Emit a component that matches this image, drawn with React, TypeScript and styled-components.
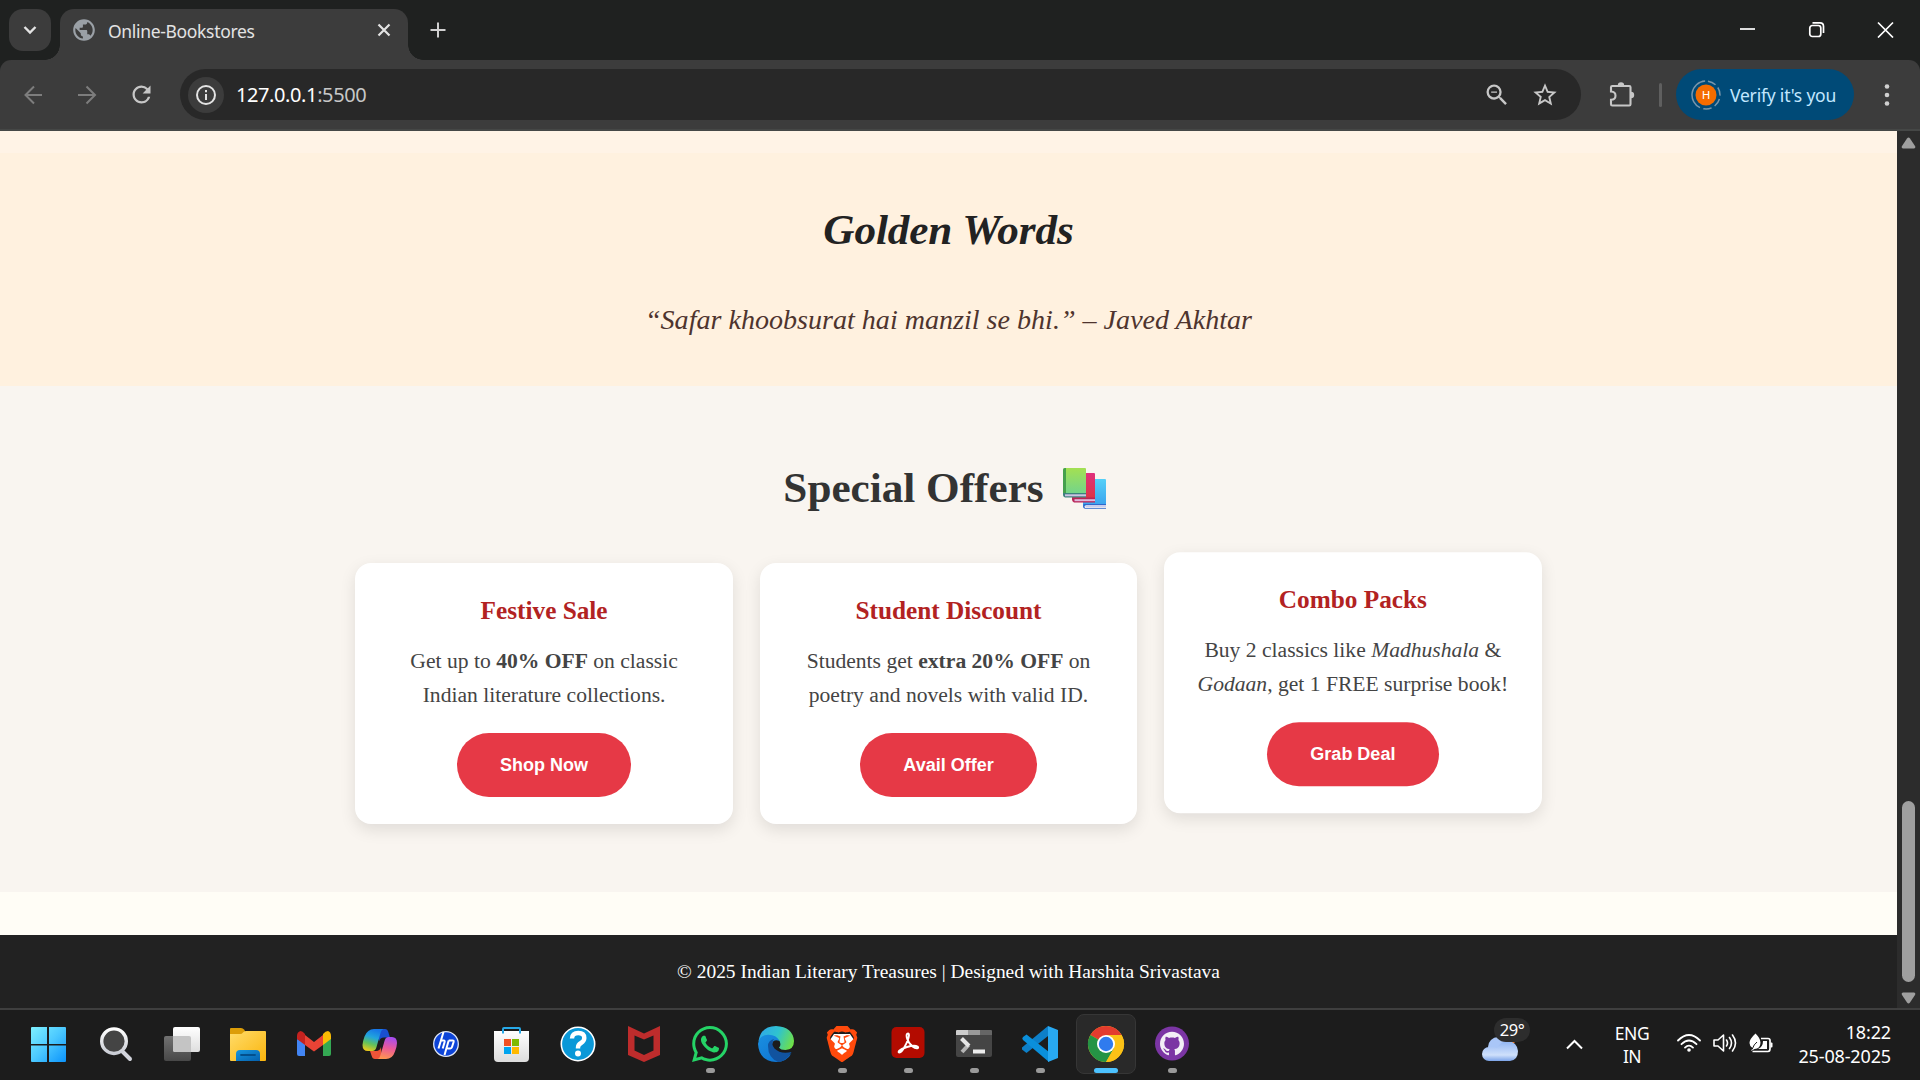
import React from "react";
import styled, { createGlobalStyle } from "styled-components";
import { MdPublic, MdRefresh, MdStarBorder, MdZoomOut } from "react-icons/md";
import { SiBrave, SiGithub } from "react-icons/si";
import { FaWhatsapp } from "react-icons/fa";

const Global = createGlobalStyle`
  * { box-sizing: border-box; }
  html, body { margin: 0; padding: 0; overflow: hidden; background: #1c1c1c; }
  h2, h3, p { margin: 0; }
`;

const ui = `"Noto Sans", "Open Sans", sans-serif`;
const serif = `"Liberation Serif", "Times New Roman", serif`;

const Screen = styled.div`
  width: 1920px;
  height: 1080px;
  display: flex;
  flex-direction: column;
  font-family: ${ui};
  overflow: hidden;
`;

/* ---------- browser frame ---------- */
const TabStrip = styled.div`
  height: 60px;
  flex: none;
  display: flex;
  align-items: flex-start;
  padding: 9px 0 0 9px;
  background: #1f2120;
`;
const TabSearch = styled.div`
  width: 42px;
  height: 42px;
  border-radius: 14px;
  background: #3c3c3c;
  display: grid;
  place-items: center;
`;
const Tab = styled.div`
  position: relative;
  width: 348px;
  height: 51px;
  margin-left: 9px;
  padding: 0 17px 9px 11px;
  border-radius: 14px 14px 0 0;
  background: #3c3c3c;
  display: flex;
  align-items: center;
  color: #9aa0a6;
  svg { flex: none; }
  &::before, &::after {
    content: "";
    position: absolute;
    bottom: 0;
    width: 15px;
    height: 15px;
  }
  &::before { left: -15px; background: radial-gradient(circle at 0 0, transparent 14.5px, #3c3c3c 15px); }
  &::after { right: -15px; background: radial-gradient(circle at 100% 0, transparent 14.5px, #3c3c3c 15px); }
`;
const TabTitle = styled.span`
  flex: 1;
  margin-left: 11px;
  padding-top: 2px;
  font-size: 17.5px;
  letter-spacing: -0.33px;
  color: #e3e3e3;
  white-space: nowrap;
`;
const NewTab = styled.div`
  margin: 13px 0 0 22px;
  display: flex;
`;
const WindowButtons = styled.div`
  margin: 12px 26px 0 auto;
  display: flex;
  gap: 52px;
`;
const ToolbarWrap = styled.div`
  height: 71px;
  flex: none;
  background: #1f2120;
`;
const Toolbar = styled.div`
  height: 71px;
  border-radius: 11px 11px 0 0;
  background: #3c3c3c;
  box-shadow: inset 0 -2px 0 #454746;
  display: flex;
  align-items: center;
  padding: 0 26px 2px 20px;
`;
const NavIcons = styled.div`
  display: flex;
  align-items: center;
  gap: 26px;
  width: 160px;
  color: #c7c7c7;
`;
const AddressBar = styled.div`
  width: 1401px;
  height: 51px;
  border-radius: 26px;
  background: #282828;
  display: flex;
  align-items: center;
  padding: 0 22px 0 8px;
  color: #c7c7c7;
`;
const InfoChip = styled.div`
  width: 36px;
  height: 36px;
  border-radius: 50%;
  background: #3c3c3c;
  display: grid;
  place-items: center;
`;
const Url = styled.div`
  flex: 1;
  margin-left: 12px;
  font-size: 20px;
  letter-spacing: -0.4px;
  color: #fff;
  span { color: #c7c7c7; }
`;
const BarIcon = styled.span<{ $gap: number }>`
  display: flex;
  margin-left: ${(p) => p.$gap}px;
`;
const Divider = styled.div`
  width: 3px;
  height: 24px;
  margin: 0 14px 0 23px;
  border-radius: 2px;
  background: #5f5f5f;
`;
const Profile = styled.div`
  width: 178px;
  height: 51px;
  border-radius: 26px;
  background: #004a77;
  display: flex;
  align-items: center;
  padding-left: 15px;
  gap: 9px;
  font-size: 17.5px;
  letter-spacing: -0.2px;
  color: #c2e7ff;
  white-space: nowrap;
`;

/* ---------- web page ---------- */
const Viewport = styled.div`
  height: 877px;
  flex: none;
  display: flex;
`;
const Page = styled.main`
  width: 1897px;
  display: flex;
  flex-direction: column;
  font-family: ${serif};
  text-align: center;
  background: #fffdf6;
`;
const SectionTail = styled.div`
  height: 22px;
  flex: none;
  background: #fff3e6;
`;
const GoldenWords = styled.section`
  height: 233px;
  flex: none;
  padding-top: 52px;
  background: #fff1df;
  font-style: italic;
`;
const Heading = styled.h2<{ $color: string; $tracking?: number }>`
  display: flex;
  justify-content: center;
  align-items: center;
  font-size: 43.2px;
  line-height: 50px;
  letter-spacing: ${(p) => p.$tracking ?? 0}px;
  color: ${(p) => p.$color};
  svg { margin: 0 8px 0 19px; }
`;
const Quote = styled.p`
  margin-top: 47px;
  font-size: 28.08px;
  line-height: 36px;
  color: #4e342e;
`;
const Offers = styled.section`
  height: 506px;
  flex: none;
  padding-top: 77px;
  background: #f9f5f0;
`;
const CardRow = styled.div`
  display: flex;
  justify-content: center;
  gap: 26.6px;
  margin-top: 50px;
`;
const Card = styled.article<{ $lifted?: boolean }>`
  width: 377.8px;
  height: 261px;
  padding: 32px 0 0;
  border-radius: 16px;
  background: #fff;
  box-shadow: 0 5.4px 16px rgba(0, 0, 0, 0.1);
  transform: ${(p) => (p.$lifted ? "translateY(-10.8px)" : "none")};
`;
const CardTitle = styled.h3`
  font-size: 25.27px;
  line-height: 30px;
  color: #b22222;
`;
const CardText = styled.p`
  margin-top: 19px;
  font-size: 21.6px;
  line-height: 34.4px;
  color: #444;
  white-space: nowrap;
`;
const CardButton = styled.button`
  height: 64px;
  margin-top: 20px;
  padding: 2px 43.4px 0;
  border: 0;
  border-radius: 40px;
  background: #e63946;
  color: #fff;
  font: bold 18px "Liberation Sans", Arial, sans-serif;
`;
const Footer = styled.footer`
  height: 73px;
  margin-top: auto;
  background: #222;
  color: #fff;
  font-size: 19.44px;
  line-height: 74px;
`;
const Scrollbar = styled.div`
  width: 23px;
  padding: 6px 0 4px;
  background: #2c2c2c;
  display: flex;
  flex-direction: column;
  align-items: center;
  justify-content: space-between;
`;
const ScrollEnd = styled.div`
  display: flex;
  flex-direction: column;
  align-items: center;
  gap: 10px;
`;
const Thumb = styled.div`
  width: 13px;
  height: 181px;
  border-radius: 7px;
  background: #9f9f9f;
`;

/* ---------- taskbar ---------- */
const Taskbar = styled.div`
  height: 72px;
  flex: none;
  border-top: 2px solid #3f3f3f;
  background: #1c1c1c;
  display: flex;
  align-items: flex-start;
  justify-content: space-between;
  padding: 4px 29px 0 20px;
  color: #fff;
`;
const Apps = styled.div`
  display: flex;
  gap: 6px;
`;
const AppTile = styled.div<{ $active?: boolean }>`
  width: 60px;
  height: 60px;
  padding-top: ${(p) => (p.$active ? 11 : 12)}px;
  border-radius: 8px;
  border: ${(p) => (p.$active ? "1px solid #363636" : "0")};
  background: ${(p) => (p.$active ? "#292929" : "transparent")};
  display: flex;
  flex-direction: column;
  align-items: center;
  gap: 6px;
  svg { flex: none; overflow: visible; }
`;
const Running = styled.div<{ $active?: boolean }>`
  width: ${(p) => (p.$active ? 24 : 9)}px;
  height: 5px;
  flex: none;
  border-radius: 3px;
  background: ${(p) => (p.$active ? "#4cc2ff" : "#9a9a9a")};
`;
const Tray = styled.div`
  height: 60px;
  display: flex;
  align-items: center;
`;
const Weather = styled.div`
  position: relative;
  width: 48px;
  height: 60px;
  padding-top: 21px;
  margin-right: 36px;
`;
const Temp = styled.span`
  position: absolute;
  left: 12px;
  top: 4px;
  width: 36px;
  height: 24px;
  border-radius: 12px;
  background: #2d2d2d;
  font-size: 16.5px;
  letter-spacing: -0.5px;
  line-height: 23px;
  text-align: center;
`;
const Lang = styled.div`
  width: 50px;
  margin: 1px 20px 0 24px;
  text-align: center;
  font-size: 17.5px;
  letter-spacing: -0.5px;
  line-height: 23px;
`;
const Status = styled.div`
  display: flex;
  gap: 12px;
`;
const Clock = styled.div`
  width: 118px;
  text-align: right;
  font-size: 18px;
  letter-spacing: -0.14px;
  line-height: 24px;
  padding-bottom: 1px;
`;

const Books = () => (
  <svg width="43" height="41" viewBox="0 0 43 41">
    <defs>
      <linearGradient id="bg" x1="0" y1="0" x2="0" y2="1"><stop stopColor="#a4e052" /><stop offset="1" stopColor="#72d48c" /></linearGradient>
      <linearGradient id="bb" x1="0" y1="0" x2="0" y2="1"><stop stopColor="#56d0f8" /><stop offset="1" stopColor="#3aa2ee" /></linearGradient>
      <linearGradient id="br" x1="0" y1="0" x2="0" y2="1"><stop stopColor="#e0307c" /><stop offset="1" stopColor="#de3344" /></linearGradient>
    </defs>
    <path d="M22 11h20q1 0 1 1v26H20V13z" fill="url(#bb)" />
    <path d="M20.500 36H43v1H22q-1 1.500 0 3h21v.8H22q-2-.8-2-2.400z" fill="#2f68cc" />
    <path d="M22.500 37H43v2.500H22.500z" fill="#c9ceee" />
    <path d="M11 5h20q1 0 1 1v25H9V7z" fill="url(#br)" />
    <path d="M9 29.500h23v5H11q-2-.8-2-3z" fill="#b92458" />
    <path d="M11.500 31.200H32v2H11.500z" fill="#dfb9dc" />
    <path d="M2 0h20q1 0 1 1v25H0V2q0-2 2-2z" fill="url(#bg)" />
    <path d="M0 2q0-2 2-2h1v25H0z" fill="#45a04d" />
    <path d="M0 25h23v4.500H2q-2-.8-2-2.500z" fill="#3e817d" />
    <path d="M2 26.300h21v2H2z" fill="#cdc3e4" />
  </svg>
);

const S = ({ children }: { children: React.ReactNode }) => (
  <svg width="36" height="36" viewBox="0 0 36 36">{children}</svg>
);

const Windows = () => (
  <S>
    <defs><linearGradient id="win" gradientUnits="userSpaceOnUse" x1="0" y1="1" x2="36" y2="36"><stop stopColor="#80f2ff" /><stop offset=".5" stopColor="#4cc9ff" /><stop offset="1" stopColor="#0b93fb" /></linearGradient></defs>
    <path transform="translate(-2 0)" fill="url(#win)" d="M2 1h15v17H1V2q0-1 1-1zM19 1h16q1 0 1 1v16H19zM1 19.500h16V36H2q-1 0-1-1zM19 19.500h17V35q0 1-1 1H19z" />
  </S>
);
const Search = () => (
  <S>
    <defs><linearGradient id="sr" x1="0" y1="0" x2="0" y2="1"><stop stopColor="#fff" /><stop offset="1" stopColor="#c9ccd4" /></linearGradient></defs>
    <path d="M24.500 25.500l7.500 7.500" stroke="#d2d4dc" strokeWidth="4" strokeLinecap="round" />
    <circle cx="16" cy="15.200" r="12.300" fill="#444" stroke="url(#sr)" strokeWidth="3.400" />
  </S>
);
const TaskView = () => (
  <S>
    <defs>
      <linearGradient id="tv" x1="0" y1="0" x2="0" y2="1"><stop stopColor="#717171" /><stop offset="1" stopColor="#484848" /></linearGradient>
      <linearGradient id="tw" x1="0" y1="0" x2="0" y2="1"><stop stopColor="#fff" /><stop offset="1" stopColor="#dedede" /></linearGradient>
    </defs>
    <rect x="0" y="10" width="27" height="25" rx="2" fill="url(#tv)" />
    <rect x="9" y="1" width="27" height="25" rx="2" fill="url(#tw)" />
    <path d="M9 10h16q2 0 2 2v14H11q-2 0-2-2z" fill="#c4c4c4" />
  </S>
);
const Folder = () => (
  <S>
    <defs>
      <linearGradient id="fo" x1="0" y1="0" x2="1" y2="1"><stop stopColor="#ffdc6a" /><stop offset="1" stopColor="#fbb50d" /></linearGradient>
      <linearGradient id="fb" x1="0" y1="0" x2="1" y2="1"><stop stopColor="#1696e0" /><stop offset="1" stopColor="#0560ad" /></linearGradient>
    </defs>
    <path d="M0 8V3q0-1 1-1h10q2 0 3 1.500l2 3L11 12H0z" fill="#dc9d08" />
    <path d="M0 8h10q2 0 3-1.500T16 5h19q1 0 1 1v28q0 1-1 1H1q-1 0-1-1z" fill="url(#fo)" />
    <path d="M6 35v-7q0-4 4-4h16q4 0 4 4v7z" fill="url(#fb)" />
    <path d="M11 29h14" stroke="#034f8c" strokeWidth="1.800" strokeLinecap="round" />
  </S>
);
const Gmail = () => (
  <S>
    <path d="M1 13v15q0 2 2 2h6V17z" fill="#4285f4" />
    <path d="M27 17v13h6q2 0 2-2V12z" fill="#34a853" />
    <path d="M9 9l9 7 9-7v10l-9 6.500L9 19z" fill="#ea4335" />
    <path d="M1 10q0-4 3.500-5 2 0 4.500 3v11l-8-6z" fill="#c5221f" />
    <path d="M27 8q2.500-3 5-3 3 1 3 5v3l-8 6z" fill="#fbbc04" />
  </S>
);
const Copilot = () => (
  <S>
    <defs>
      <linearGradient id="c1" x1=".5" y1="0" x2=".2" y2="1"><stop stopColor="#1778e8" /><stop offset=".35" stopColor="#22a5dc" /><stop offset=".65" stopColor="#62c25c" /><stop offset="1" stopColor="#f6cb16" /></linearGradient>
      <linearGradient id="c2" x1=".6" y1="0" x2=".4" y2="1"><stop stopColor="#a54cf0" /><stop offset=".5" stopColor="#ec5a98" /><stop offset="1" stopColor="#ff9550" /></linearGradient>
    </defs>
    <path d="M15 3h8q2.500 0 3.300 3l1.700 5.500h-6q-4 0-5 4z" fill="#1a4fd0" />
    <path d="M20 33h-7q-2.600 0-3.300-3L8 25h6q4 0 5-4z" fill="#ef5438" />
    <path d="M12 3h9.500q-2.200.5-3 4l-4 14q-1 4-4 4H6q-5.500 0-5.500-6 0-3 2-8.500Q5.500 3 12 3z" fill="url(#c1)" />
    <path d="M24 33h-8.500q2.200-.5 3-4l4-14q1-4 4-4H30q5 0 5 6 0 3-2 8.500Q30.500 33 24 33z" fill="url(#c2)" />
  </S>
);
const Hp = () => (
  <S>
    <circle cx="18" cy="18" r="12.300" fill="#0d44d8" stroke="#dfe6f5" strokeWidth="1.300" />
    <path d="M15.500 6l-5 16.500M13 14.500h2.800q1.200 0 .8 1.600L14.700 22.500M20.700 14.500L16.500 29M20.700 14.500h4q1.300 0 .9 1.500L24 21q-.4 1.400-1.700 1.400h-3" fill="none" stroke="#fff" strokeWidth="2" />
  </S>
);
const Store = () => (
  <S>
    <defs><linearGradient id="st" x1="0" y1="0" x2="0" y2="1"><stop stopColor="#fff" /><stop offset="1" stopColor="#dcdcdc" /></linearGradient></defs>
    <path d="M0 5h35v27q0 4-4 4H4q-4 0-4-4z" fill="url(#st)" />
    <path d="M9 7.500V3q0-1 1-1h15q1 0 1 1v4.500" fill="none" stroke="#27a9e8" strokeWidth="2" />
    <path d="M10 13h7v7h-7z" fill="#f25022" /><path d="M18 13h7v7h-7z" fill="#7fba00" />
    <path d="M10 21h7v7h-7z" fill="#00a4ef" /><path d="M18 21h7v7h-7z" fill="#ffb900" />
  </S>
);
const Help = () => (
  <S>
    <circle cx="18" cy="18" r="16.700" fill="#0a98d8" stroke="#fff" strokeWidth="1.600" />
    <path d="M12 12.500q0-5.500 6.300-5.500 6 0 6 5 0 3-3.300 5-3 1.800-3 4.500v1" fill="none" stroke="#fff" strokeWidth="4.400" />
    <circle cx="18" cy="27.500" r="3" fill="#fff" />
  </S>
);
const Mcafee = () => (
  <S>
    <path d="M2 0l16 7.500L34 0v29l-16 7-16-7z" fill="#be2c2c" />
    <path d="M8.500 9.500l9.500 4 9.500-4v15L18 29l-9.500-4.500z" fill="#1c1c1c" />
  </S>
);
const Edge = () => (
  <S>
    <defs>
      <linearGradient id="e1" x1="0" y1=".3" x2="1" y2=".6"><stop stopColor="#2fa8e8" /><stop offset=".5" stopColor="#2fc3cf" /><stop offset="1" stopColor="#6fe048" /></linearGradient>
      <linearGradient id="e2" x1="0" y1="0" x2="1" y2="1"><stop stopColor="#1a8fe0" /><stop offset="1" stopColor="#0c6fcf" /></linearGradient>
    </defs>
    <path d="M.500 15Q3 0 18 0q17 1 18 15 0 8.500-8.500 9-5 0-6.500-2.500 1.800-1.500 1.300-4Q22 13 17 13 10 9 .500 15z" fill="url(#e1)" />
    <path d="M0 18Q1 9 10 8.800q8-.3 11.500 6-6.500-2.300-7.500 3.500-.5 9 8 12 8 1.500 11.500-3Q29 36 18 36 1 35 0 18z" fill="url(#e2)" />
    <path d="M10 20q0-5.500 6-7-3.500 5 .5 9.500 6 6 17 3.500Q29 35 20.500 36 10 32 10 20z" fill="#11539f" />
  </S>
);
const Acrobat = () => (
  <S>
    <rect x="1.500" y="1" width="33" height="31" rx="5" fill="#b30b00" />
    <path d="M18 7.500q-2 0-1.200 4 1.200 5 5.700 9 2.500 2 4.700 1.800 1.800-.5.300-1.800-3-1.800-10.500.5-6 2-8 4-1 1.600.5 1.600 2-.2 5-5.600Q18.500 14 19 9.500q0-2-1-2z" fill="none" stroke="#fff" strokeWidth="1.900" />
  </S>
);
const Terminal = () => (
  <S>
    <path d="M0 9h36v20q0 2-2 2H2q-2 0-2-2z" fill="#454545" />
    <path d="M0 9V5q0-1 1-1h11v5z" fill="#ccc" /><path d="M12 4h12v5H12z" fill="#999" /><path d="M24 4h11q1 0 1 1v4H24z" fill="#666" />
    <path d="M12.500 19L6 26" stroke="#b5b5b5" strokeWidth="4" /><path d="M5.500 12.500l7.500 7.500" stroke="#e6e6e6" strokeWidth="4" />
    <path d="M17 23.500h12v4H17z" fill="#eee" />
  </S>
);
const VsCode = () => (
  <S>
    <path d="M26 0v10L4.500 27 0 23.500v-2z" fill="#0d7fc8" />
    <path d="M1 11l3.500-2.500L27 26v10L1 14q-1.500-1.500 0-3z" fill="#0a8fdb" />
    <path d="M26 0l10 4v28l-10 4z" fill="#28a9f2" />
  </S>
);
const Chrome = () => (
  <S>
    <circle cx="18" cy="18" r="18" fill="#fbc116" />
    <path d="M18 18L2.400 9A18 18 0 0 1 33.600 9z" fill="#e33b2e" />
    <path d="M2.400 9A18 18 0 0 0 18 36l7.800-13.500L18 18z" fill="#259445" />
    <path d="M18 36l7.800-13.500L27 18 18 9h15.600A18 18 0 0 1 18 36z" fill="#fbc116" />
    <circle cx="18" cy="18" r="9" fill="#fff" /><circle cx="18" cy="18" r="7.200" fill="#2f7bee" />
  </S>
);
const Brave = () => (
  <S>
    <path d="M10 8h16l4 6-3 10-9 6-9-6-3-10z" fill="#fff" />
    <SiBrave size={36} color="#ff4a0c" />
  </S>
);
const GitHub = () => (
  <S>
    <circle cx="18" cy="17.500" r="17" fill="#7b35a4" />
    <SiGithub x="6" y="5.500" size={24} color="#f2eef6" />
  </S>
);
const WhatsApp = () => <S><FaWhatsapp x="-2.500" y="-2.500" size={41} color="#25d366" /></S>;

const apps: { icon: React.ReactNode; running?: boolean; active?: boolean }[] = [
  { icon: <Windows /> }, { icon: <Search /> }, { icon: <TaskView /> }, { icon: <Folder /> },
  { icon: <Gmail /> }, { icon: <Copilot /> }, { icon: <Hp /> }, { icon: <Store /> },
  { icon: <Help /> }, { icon: <Mcafee /> }, { icon: <WhatsApp />, running: true }, { icon: <Edge /> },
  { icon: <Brave />, running: true }, { icon: <Acrobat />, running: true }, { icon: <Terminal />, running: true },
  { icon: <VsCode />, running: true }, { icon: <Chrome />, running: true, active: true }, { icon: <GitHub />, running: true },
];

const Arrow = ({ down }: { down?: boolean }) => (
  <svg width="15" height="12" viewBox="0 0 15 12">
    <path transform={down ? "rotate(180 7.500 6)" : undefined} d="M6 1.500q1.500-1.800 3 0l5 7.500q1 2-1 2.500H2q-2-.5-1-2.500z" fill="#9f9f9f" />
  </svg>
);

const Nav = ({ d, color, w = 2 }: { d: string; color: string; w?: number }) => (
  <svg width="28" height="28" viewBox="0 0 28 28" fill="none" stroke={color} strokeWidth={w}><path d={d} /></svg>
);

export default function App() {
  return (
    <Screen>
      <Global />
      <TabStrip>
        <TabSearch>
          <svg width="14" height="10" viewBox="0 0 14 10" fill="none" stroke="#e3e3e3" strokeWidth="2.400"><path d="M1.500 2L7 7.500 12.500 2" /></svg>
        </TabSearch>
        <Tab>
          <MdPublic size={26} />
          <TabTitle>Online-Bookstores</TabTitle>
          <svg width="14" height="14" viewBox="0 0 14 14" stroke="#e3e3e3" strokeWidth="2.200"><path d="M1.500 1.500l11 11M12.500 1.500l-11 11" /></svg>
        </Tab>
        <NewTab>
          <svg width="16" height="16" viewBox="0 0 16 16" stroke="#d0d0d0" strokeWidth="2"><path d="M8 .500v15M.500 8h15" /></svg>
        </NewTab>
        <WindowButtons>
          <svg width="17" height="17" viewBox="0 0 17 17" stroke="#fff" strokeWidth="1.700"><path d="M1 8h15" /></svg>
          <svg width="17" height="17" viewBox="0 0 17 17" fill="none" stroke="#fff" strokeWidth="1.700"><rect x="1.800" y="4.500" width="11" height="11" rx="2.500" /><path d="M4.500 1.800h7.500q3.500 0 3.500 3.500V12" /></svg>
          <svg width="17" height="17" viewBox="0 0 17 17" stroke="#fff" strokeWidth="1.700"><path d="M1 1.500l15 15M16 1.500L1 16.500" /></svg>
        </WindowButtons>
      </TabStrip>

      <ToolbarWrap>
        <Toolbar>
          <NavIcons>
            <Nav color="#7d7d7d" d="M22 14H6M14 5.500L5.500 14l8.500 8.500" />
            <Nav color="#7d7d7d" d="M4 14h17M12.500 5.500L21 14l-8.500 8.500" />
            <MdRefresh size={27} />
          </NavIcons>
          <AddressBar>
            <InfoChip>
              <svg width="22" height="22" viewBox="0 0 22 22" fill="none" stroke="#e3e3e3" strokeWidth="2"><circle cx="11" cy="11" r="9" /><path d="M11 10v6M11 6v2.200" /></svg>
            </InfoChip>
            <Url>127.0.0.1<span>:5500</span></Url>
            <BarIcon $gap={0}><MdZoomOut size={28} /></BarIcon>
            <BarIcon $gap={20}><MdStarBorder size={28} /></BarIcon>
          </AddressBar>
          <BarIcon $gap={27}>
            <svg width="28" height="28" viewBox="0 0 28 28">
              <path d="M4.300 5h17q1.200 0 1.200 1.200v17q0 1.300-1.200 1.300h-17Q3 24.500 3 23.200v-4.500q4.500 0 4.500-4T3 10.500V6.200Q3 5 4.300 5z" fill="none" stroke="#c7c7c7" strokeWidth="2.100" />
              <path d="M9.800 4.500a3.200 3.200 0 0 1 6.400 0zM23 10.800a3.200 3.200 0 0 1 0 6.400z" fill="#c7c7c7" />
            </svg>
          </BarIcon>
          <Divider />
          <Profile>
            <svg width="30" height="30" viewBox="0 0 30 30">
              <circle cx="15" cy="15" r="14" fill="none" stroke="#7896ab" strokeWidth="1.500" strokeDasharray="8.500 3.500 8.500 3.500 8.500 3.500 8.500 3.500 36.500 3.460" transform="rotate(-82 15 15)" />
              <circle cx="15" cy="15" r="10.500" fill="#f56c00" />
              <text x="15" y="19.200" fontSize="11.500" fontFamily="Roboto, sans-serif" fill="#fff" textAnchor="middle">H</text>
            </svg>
            Verify it's you
          </Profile>
          <BarIcon $gap={30}>
            <svg width="6" height="24" viewBox="0 0 6 24" fill="#d0d0d0"><circle cx="3" cy="3.500" r="2.300" /><circle cx="3" cy="12" r="2.300" /><circle cx="3" cy="20.500" r="2.300" /></svg>
          </BarIcon>
        </Toolbar>
      </ToolbarWrap>

      <Viewport>
        <Page>
          <SectionTail />
          <GoldenWords>
            <Heading $color="#222" $tracking={-0.1}>Golden Words</Heading>
            <Quote>“Safar khoobsurat hai manzil se bhi.” – Javed Akhtar</Quote>
          </GoldenWords>
          <Offers>
            <Heading $color="#333">Special Offers<Books /></Heading>
            <CardRow>
              <Card>
                <CardTitle>Festive Sale</CardTitle>
                <CardText>Get up to <b>40% OFF</b> on classic<br />Indian literature collections.</CardText>
                <CardButton>Shop Now</CardButton>
              </Card>
              <Card>
                <CardTitle>Student Discount</CardTitle>
                <CardText>Students get <b>extra 20% OFF</b> on<br />poetry and novels with valid ID.</CardText>
                <CardButton>Avail Offer</CardButton>
              </Card>
              <Card $lifted>
                <CardTitle>Combo Packs</CardTitle>
                <CardText>Buy 2 classics like <i>Madhushala</i> &amp;<br /><i>Godaan</i>, get 1 FREE surprise book!</CardText>
                <CardButton>Grab Deal</CardButton>
              </Card>
            </CardRow>
          </Offers>
          <Footer>© 2025 Indian Literary Treasures | Designed with Harshita Srivastava</Footer>
        </Page>
        <Scrollbar>
          <Arrow />
          <ScrollEnd><Thumb /><Arrow down /></ScrollEnd>
        </Scrollbar>
      </Viewport>

      <Taskbar>
        <Apps>
          {apps.map((a, i) => (
            <AppTile key={i} $active={a.active}>
              {a.icon}
              {a.running && <Running $active={a.active} />}
            </AppTile>
          ))}
        </Apps>
        <Tray>
          <Weather>
            <svg width="36" height="27" viewBox="0 0 36 27">
              <defs><linearGradient id="cl" x1="0" y1="0" x2="0" y2="1"><stop stopColor="#8fb4f2" /><stop offset=".7" stopColor="#cfe0fb" /><stop offset="1" stopColor="#7ba3e8" /></linearGradient></defs>
              <path d="M26 0h8v6l-3 3h-5z" fill="#f47b20" />
              <circle cx="16" cy="12" r="10" fill="#a9c6f7" />
              <path d="M7 26a7 7 0 0 1 0-14q4-1 8 1 4-7 11-7 9 1 10 10 0 9-8 10z" fill="url(#cl)" />
            </svg>
            <Temp>29°</Temp>
          </Weather>
          <svg width="17" height="11" viewBox="0 0 17 11" fill="none" stroke="#fff" strokeWidth="2"><path d="M1 9.500L8.500 2 16 9.500" /></svg>
          <Lang>ENG<br />IN</Lang>
          <Status>
            <svg width="24" height="20" viewBox="0 0 24 20" fill="none" stroke="#fff" strokeWidth="1.800" strokeLinecap="round"><path d="M1 7.500q11-11 22 0M4.500 11.200q7.500-7.500 15 0M8 14.600q4-4 8 0" /><circle cx="12" cy="17" r="1.800" fill="#fff" stroke="none" /></svg>
            <svg width="24" height="20" viewBox="0 0 24 20" fill="none" stroke="#fff" strokeWidth="1.600" strokeLinecap="round" strokeLinejoin="round"><path d="M1 7v6h4l5.500 5V2L5 7zM13.500 7q2 3 0 6M16.500 4.500q4 5.500 0 11M19.500 2q6 8 0 16" /></svg>
            <svg width="24" height="22" viewBox="0 0 24 22" fill="none" stroke="#fff" strokeWidth="1.700"><path d="M12 5.500h7q2 0 2 2v8q0 3-2 3H3.500" /><path d="M21.500 9.500h1q1 0 1 1v3q0 1-1 1h-1z" fill="#fff" stroke="none" /><path d="M6.500.5q5 5 5 9 0 6-6 6.500l-3.500 2 1.500-3Q.5 13 .5 10q0-4 6-9.500z" fill="#fff" stroke="none" /><path d="M14 8h4v8H9q5-2 5-8z" fill="#fff" stroke="none" /><path d="M3 16.500q2-5.500 5-7.500" stroke="#1c1c1c" strokeWidth="1" /></svg>
          </Status>
          <Clock>18:22<br />25-08-2025</Clock>
        </Tray>
      </Taskbar>
    </Screen>
  );
}
